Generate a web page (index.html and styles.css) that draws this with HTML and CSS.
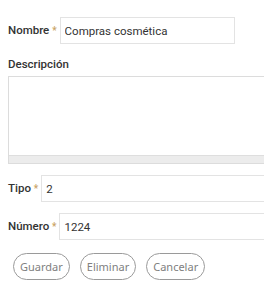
FILE: index.html
```html
<!DOCTYPE html>
<html lang="es">
<head>
<meta charset="utf-8">
<link rel="stylesheet" href="styles.css">
</head>
<body>
<form class="form">
  <div class="row row-nombre">
    <label class="label">Nombre <span class="req">*</span></label>
    <input class="input input-nombre" type="text" value="Compras cosmética">
  </div>
  <div class="label label-block">Descripción</div>
  <div class="area">
    <textarea class="area-text"></textarea>
    <div class="area-bar"></div>
  </div>
  <div class="row row-tipo">
    <label class="label">Tipo <span class="req">*</span></label>
    <input class="input input-wide" type="text" value="2">
  </div>
  <div class="row row-numero">
    <label class="label">Número <span class="req">*</span></label>
    <input class="input input-wide" type="text" value="1224">
  </div>
  <div class="buttons">
    <button type="button" class="btn">Guardar</button>
    <button type="button" class="btn">Eliminar</button>
    <button type="button" class="btn">Cancelar</button>
  </div>
</form>
</body>
</html>
```
FILE: styles.css
```css
html, body {
  margin: 0;
  padding: 0;
  background: #fff;
  overflow: hidden;
}
body {
  font-family: Roboto, "Liberation Sans", sans-serif;
  color: #333;
  font-size: 12px;
}
.form {
  padding: 17px 0 0 8px;
  width: 300px;
}
.row {
  display: flex;
  align-items: center;
  height: 27px;
}
.label {
  font-weight: 500;
  font-size: 11.5px;
  line-height: 16px;
  color: #333;
  white-space: nowrap;
  margin-right: 3px;
}
.req {
  color: #c9a264;
  font-size: 10px;
}
.input {
  box-sizing: border-box;
  height: 27px;
  border: 1px solid #e3e3e3;
  padding: 0 4px;
  font-family: Roboto, "Liberation Sans", sans-serif;
  font-size: 11.5px;
  color: #333;
  background: #fff;
  outline: none;
}
.input-nombre {
  width: 175px;
}
.input-wide {
  flex: 1;
  min-width: 0;
}
.label-block {
  margin-top: 12px;
  display: block;
}
.area {
  margin-top: 4px;
  width: 300px;
  height: 88px;
  box-sizing: border-box;
  border: 1px solid #dcdcdc;
  display: flex;
  flex-direction: column;
}
.area-text {
  flex: 1;
  border: none;
  resize: none;
  outline: none;
  margin: 0;
  padding: 4px;
}
.area-bar {
  height: 7px;
  background: #ececec;
  border-top: 1px solid #dedede;
}
.row-tipo {
  margin-top: 11px;
}
.row-numero {
  margin-top: 11px;
}
.buttons {
  display: flex;
  gap: 10px;
  margin-top: 13px;
  padding-left: 5px;
}
.btn {
  box-sizing: border-box;
  height: 27px;
  padding: 0 6px;
  border: 1px solid #9a9a9a;
  border-radius: 14px;
  background: #fff;
  color: #808080;
  font-family: "Noto Sans", sans-serif;
  font-size: 11px;
}
```
